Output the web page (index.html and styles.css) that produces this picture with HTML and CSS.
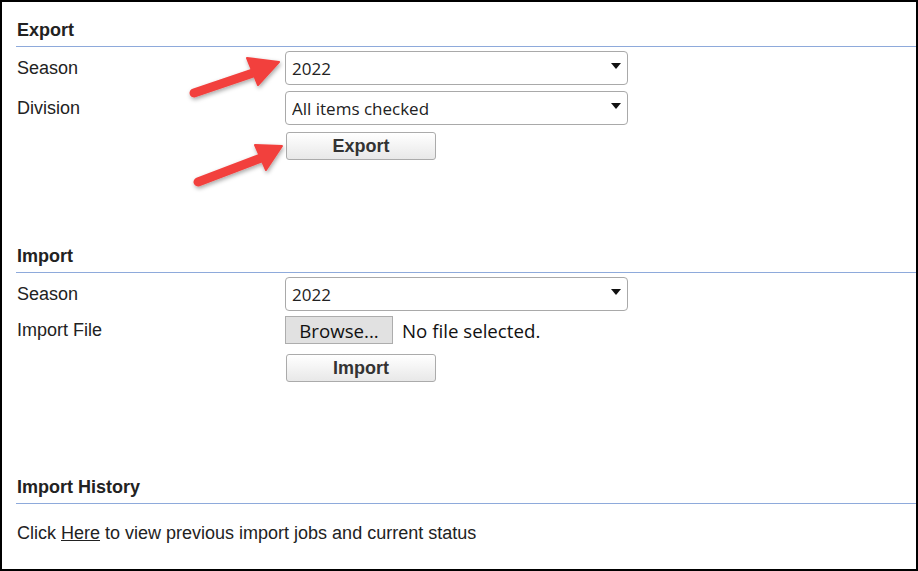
FILE: index.html
```html
<!DOCTYPE html>
<html>
<head>
<meta charset="utf-8">
<link rel="stylesheet" href="styles.css">
</head>
<body>
<div class="frame">
  <section class="sec sec-export">
    <h2 class="sec-title">Export</h2>
    <div class="form">
      <div class="row row-first">
        <label class="lbl">Season</label>
        <div class="sel"><select class="sel-input"><option>2022</option></select></div>
      </div>
      <div class="row row-second">
        <label class="lbl">Division</label>
        <div class="sel"><select class="sel-input"><option>All items checked</option></select></div>
      </div>
      <div class="row row-btn">
        <span class="lbl"></span>
        <button class="btn">Export</button>
      </div>
    </div>
  </section>

  <section class="sec sec-import">
    <h2 class="sec-title">Import</h2>
    <div class="form">
      <div class="row row-first">
        <label class="lbl">Season</label>
        <div class="sel"><select class="sel-input"><option>2022</option></select></div>
      </div>
      <div class="row row-file">
        <label class="lbl">Import File</label>
        <div class="file"><span class="browse">Browse...</span><span class="nofile">No file selected.</span></div>
      </div>
      <div class="row row-btn2">
        <span class="lbl"></span>
        <button class="btn">Import</button>
      </div>
    </div>
  </section>

  <section class="sec sec-history">
    <h2 class="sec-title">Import History</h2>
    <p class="hist-text">Click <a class="link" href="#">Here</a> to view previous import jobs and current status</p>
  </section>

  <svg class="arrows" width="918" height="571" viewBox="0 0 918 571">
    <defs>
      <filter id="sh" x="-20%" y="-20%" width="140%" height="140%">
        <feDropShadow dx="1" dy="2" stdDeviation="2" flood-color="#000" flood-opacity="0.35"/>
      </filter>
    </defs>
    <g filter="url(#sh)" fill="#f2403e" stroke="#f2403e">
      <line x1="194" y1="93" x2="256" y2="72" stroke-width="9" stroke-linecap="round"/>
      <polygon points="279,62 247,58 258,85" stroke-width="2" stroke-linejoin="round"/>
      <line x1="198" y1="182" x2="261" y2="158" stroke-width="9" stroke-linecap="round"/>
      <polygon points="282,146 255,145 266,170" stroke-width="2" stroke-linejoin="round"/>
    </g>
  </svg>
</div>
</body>
</html>
```
FILE: styles.css
```css
html, body {
  margin: 0;
  padding: 0;
  background: #fff;
}
.frame {
  position: relative;
  width: 918px;
  height: 571px;
  box-sizing: border-box;
  border: 2px solid #000;
  padding: 0 0 0 14px;
  font-family: "Liberation Sans", Arial, sans-serif;
  font-size: 18px;
  color: #222;
  overflow: hidden;
}
.sec-title {
  margin: 0;
  padding: 18px 0 6px 1px;
  line-height: 20px;
  height: 20px;
  font-size: 18px;
  font-weight: bold;
  color: #222;
  border-bottom: 1px solid #8eaadb;
}
.sec-export { height: 226px; }
.sec-import { height: 231px; }
.form {
  display: flex;
  flex-direction: column;
}
.row {
  display: grid;
  grid-template-columns: 269px 1fr;
  align-items: center;
}
.lbl {
  padding-left: 1px;
  line-height: 20px;
}
.row-first { margin-top: 4px; }
.row-second { margin-top: 6px; }
.row-btn { margin-top: 7px; }
.row-file { margin-top: 5px; }
.row-btn2 { margin-top: 10px; }
.sel {
  position: relative;
  width: 343px;
  height: 34px;
}
.sel::after {
  content: "";
  position: absolute;
  right: 7px;
  top: 12px;
  border-left: 5px solid transparent;
  border-right: 5px solid transparent;
  border-top: 6px solid #111;
}
.sel-input {
  -webkit-appearance: none;
  appearance: none;
  width: 100%;
  height: 100%;
  box-sizing: border-box;
  border: 1px solid #a9a9a9;
  border-radius: 4px;
  background: #fff;
  padding: 0 0 0 6px;
  font-family: "Open Sans", "Noto Sans", sans-serif;
  font-size: 17px;
  color: #222;
}
.btn {
  width: 150px;
  height: 28px;
  margin-left: 1px;
  box-sizing: border-box;
  border: 1px solid #ababab;
  border-radius: 3px;
  background: linear-gradient(#ffffff, #e8e8e8);
  font-family: "Liberation Sans", Arial, sans-serif;
  font-size: 18px;
  font-weight: bold;
  color: #333;
  padding: 0;
  line-height: 26px;
}
.file {
  display: flex;
  align-items: center;
  height: 28px;
  font-family: "Open Sans", "Noto Sans", sans-serif;
  font-size: 18.7px;
  color: #111;
}
.browse {
  width: 108px;
  height: 28px;
  box-sizing: border-box;
  border: 1px solid #adadad;
  background: #e1e1e1;
  display: flex;
  align-items: center;
  justify-content: center;
  margin-right: 9px;
}
.hist-text {
  margin: 19px 0 0 1px;
  line-height: 20px;
}
.link {
  color: #222;
  text-decoration: underline;
}
.arrows {
  position: absolute;
  left: -2px;
  top: -2px;
  pointer-events: none;
}
```
